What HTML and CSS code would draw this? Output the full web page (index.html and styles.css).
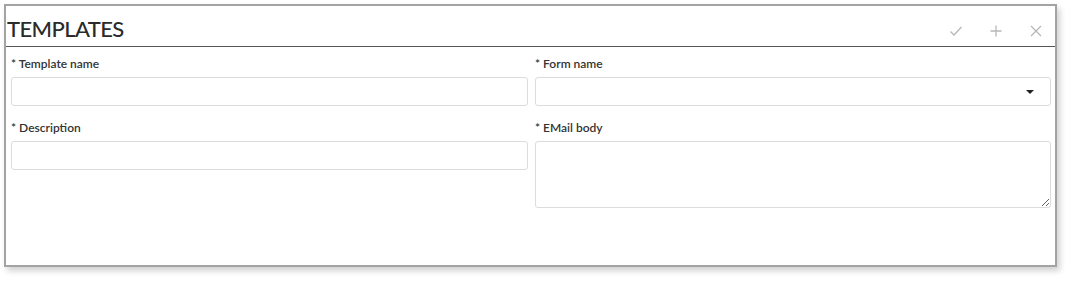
FILE: index.html
```html
<html lang="en">
<head>
    <meta charset="UTF-8">
    <meta name="viewport" content="width=device-width, initial-scale=1.0">
    <title>Templates</title>
    <link rel="stylesheet" href="styles.css">
</head>
<body>
    <div class="panel">
        <div class="panel-header">
            <h1>Templates</h1>
            <div class="tools">
                <button class="tool" title="Save">
                    <svg width="14" height="14" viewBox="0 0 14 14"><path d="M1.5 7.5 L5 11 L12.5 3" fill="none" stroke="#b8b8b8" stroke-width="1.3"/></svg>
                </button>
                <button class="tool" title="Add">
                    <svg width="14" height="14" viewBox="0 0 14 14"><path d="M7 1.5 V12.5 M1.5 7 H12.5" fill="none" stroke="#b8b8b8" stroke-width="1.3"/></svg>
                </button>
                <button class="tool" title="Close">
                    <svg width="14" height="14" viewBox="0 0 14 14"><path d="M2 2 L12 12 M12 2 L2 12" fill="none" stroke="#b8b8b8" stroke-width="1.3"/></svg>
                </button>
            </div>
        </div>
        <form class="form">
            <div class="field">
                <label for="templateName">* Template name</label>
                <input type="text" id="templateName">
            </div>
            <div class="field">
                <label>* Form name</label>
                <div class="select">
                    <span class="caret"></span>
                </div>
            </div>
            <div class="field">
                <label for="description">* Description</label>
                <input type="text" id="description">
            </div>
            <div class="field">
                <label for="emailBody">* EMail body</label>
                <textarea id="emailBody"></textarea>
            </div>
        </form>
    </div>
</body>
</html>
```

FILE: styles.css
```css
body {
    font-family: Lato, "Open Sans", sans-serif;
    background-color: #fff;
    color: #333;
    margin: 0;
    padding: 4px;
}
.panel {
    width: 1053px;
    height: 263px;
    box-sizing: border-box;
    border: 2px solid #a3a3a3;
    background: #fff;
    box-shadow: 3px 4px 6px rgba(0, 0, 0, 0.18);
}
.panel-header {
    display: flex;
    align-items: center;
    justify-content: space-between;
    height: 40px;
    border-bottom: 1px solid #555;
}
h1 {
    margin: 0 0 0 1px;
    font-size: 22px;
    font-weight: 500;
    text-transform: uppercase;
    color: #2b2b2b;
    padding-top: 4px;
    letter-spacing: -0.6px;
}
.tools {
    display: flex;
    gap: 26px;
    padding-right: 12px;
    padding-top: 10px;
}
.tool {
    background: none;
    border: none;
    padding: 0;
    width: 14px;
    height: 14px;
    cursor: pointer;
}
.form {
    display: grid;
    grid-template-columns: 517px 516px;
    column-gap: 7px;
    row-gap: 14px;
    padding: 9px 5px 0 5px;
    margin: 0;
}
.field {
    display: flex;
    flex-direction: column;
}
label {
    font-size: 12px;
    font-weight: 600;
    line-height: 16px;
    margin-bottom: 5px;
    color: #333;
}
input, .select, textarea {
    box-sizing: border-box;
    border: 1px solid #dcdcdc;
    border-radius: 3px;
    background: #fff;
    font-family: inherit;
    font-size: 12px;
    margin: 0;
}
input {
    height: 29px;
    padding: 4px 6px;
}
.select {
    height: 29px;
    position: relative;
}
.caret {
    position: absolute;
    right: 16px;
    top: 12px;
    border-left: 4px solid transparent;
    border-right: 4px solid transparent;
    border-top: 4px solid #222;
}
textarea {
    height: 67px;
    resize: both;
}
```
